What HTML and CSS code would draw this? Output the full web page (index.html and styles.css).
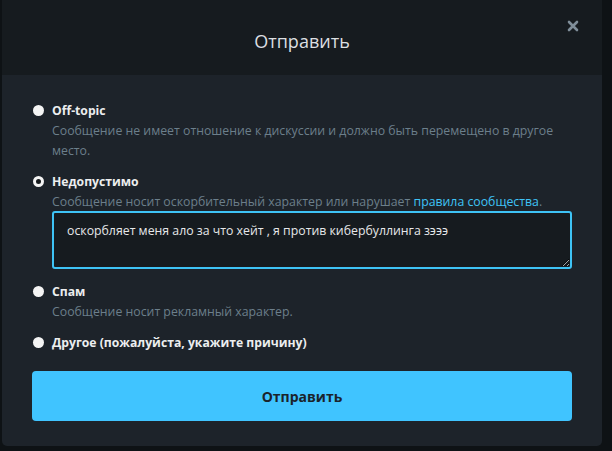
FILE: index.html
```html
<!DOCTYPE html>
<html lang="ru">
    <head>
        <meta charset="UTF-8">
        <meta name="viewport" content="width=device-width, initial-scale=1">
        <title> Жалоба </title>
        <link rel="stylesheet" href="styles.css">
    </head>
    <body>
        <div class="modal">
            <div class="modal-header">
                <h2 class="modal-title">Отправить</h2>
                <button class="close" type="button" title="Закрыть">
                    <svg width="12" height="12" viewBox="0 0 12 12">
                        <path d="M2 2 L10 10 M10 2 L2 10" stroke="#7f8e99" stroke-width="2.6" stroke-linecap="round"/>
                    </svg>
                </button>
            </div>
            <form class="modal-body" id="flagform">
                <label class="option">
                    <input type="radio" name="reason" value="offtopic">
                    <span class="option-text">
                        <span class="option-title">Off-topic</span>
                        <span class="option-desc">Сообщение не имеет отношение к дискуссии и должно быть перемещено в другое место.</span>
                    </span>
                </label>
                <label class="option">
                    <input type="radio" name="reason" value="inappropriate" checked>
                    <span class="option-text">
                        <span class="option-title">Недопустимо</span>
                        <span class="option-desc">Сообщение носит оскорбительный характер или нарушает <a href="#">правила сообщества</a>.</span>
                        <textarea class="reason-text" name="message">оскорбляет меня ало за что хейт , я против кибербуллинга зэээ</textarea>
                    </span>
                </label>
                <label class="option">
                    <input type="radio" name="reason" value="spam">
                    <span class="option-text">
                        <span class="option-title">Спам</span>
                        <span class="option-desc">Сообщение носит рекламный характер.</span>
                    </span>
                </label>
                <label class="option">
                    <input type="radio" name="reason" value="other">
                    <span class="option-text">
                        <span class="option-title">Другое (пожалуйста, укажите причину)</span>
                    </span>
                </label>
                <button class="submit" type="submit">Отправить</button>
            </form>
        </div>
    </body>
</html>
```

FILE: styles.css
```css
body {
    margin: 0;
    background-color: #0e1215;
    font-family: "Open Sans", "Noto Sans", sans-serif;
}
.modal {
    width: 600px;
    margin-left: 2px;
    background-color: #1d232a;
    border-radius: 0 0 5px 5px;
    overflow: hidden;
}
.modal-header {
    position: relative;
    height: 75px;
    display: flex;
    align-items: center;
    justify-content: center;
    background-color: #161b1f;
}
.modal-title {
    margin: 6px 0 0 0;
    font-size: 18px;
    font-weight: 400;
    color: #dcdfe1;
}
.close {
    position: absolute;
    top: 20px;
    right: 23px;
    display: flex;
    border: none;
    background: none;
    padding: 0;
    cursor: pointer;
}
.modal-body {
    display: flex;
    flex-direction: column;
    padding: 26px 30px 25px 30px;
}
.option {
    display: flex;
    align-items: flex-start;
    gap: 8px;
    margin-bottom: 11px;
    cursor: pointer;
}
.option input {
    appearance: none;
    -webkit-appearance: none;
    flex: none;
    width: 11px;
    height: 11px;
    margin: 4px 0 0 1px;
    border-radius: 50%;
    background-color: #f4f4f4;
}
.option input:checked {
    background-color: #15191c;
    border: 3px solid #f4f4f4;
}
.option-text {
    display: flex;
    flex-direction: column;
    flex: 1;
}
.option-title {
    font-size: 12.2px;
    font-weight: 700;
    line-height: 20px;
    color: #eceeef;
}
.option-desc {
    font-size: 12.3px;
    line-height: 20px;
    color: #6c7f8b;
}
.option-desc a {
    color: #3fc3f7;
    text-decoration: none;
}
.reason-text {
    box-sizing: border-box;
    width: 520px;
    height: 58px;
    margin: -1px 0 2px 0;
    padding: 9px 13px 5px 13px;
    border: 2px solid #3ec3f5;
    border-radius: 3px;
    background-color: #161b1f;
    color: #e6e8ea;
    font-family: inherit;
    font-size: 12.3px;
    outline: none;
}
.submit {
    margin-top: 7px;
    height: 50px;
    border: none;
    border-radius: 4px;
    background-color: #40c4ff;
    color: #1b232b;
    font-family: inherit;
    font-size: 14px;
    font-weight: 700;
    cursor: pointer;
}
```
